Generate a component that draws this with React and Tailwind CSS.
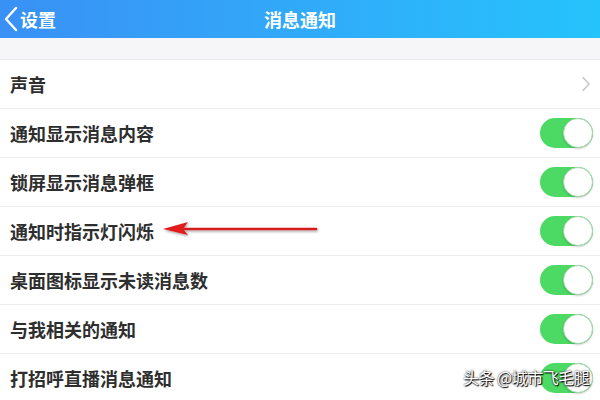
import React from "react";

// 消息通知设置页
const ROWS = [
  { label: "声音", type: "link" },
  { label: "通知显示消息内容", type: "toggle" },
  { label: "锁屏显示消息弹框", type: "toggle" },
  { label: "通知时指示灯闪烁", type: "toggle" },
  { label: "桌面图标显示未读消息数", type: "toggle" },
  { label: "与我相关的通知", type: "toggle" },
  { label: "打招呼直播消息通知", type: "toggle" },
];

function Toggle() {
  return (
    <div className="w-[53px] h-[30px] rounded-full bg-[#4cd964] flex justify-end">
      <div className="w-[30px] h-[30px] rounded-full bg-white border-[1.5px] border-[#a5d9ad] shadow-[0_1px_2px_rgba(0,0,0,0.2)]" />
    </div>
  );
}

export default function App() {
  return (
    <div
      className="relative w-[600px] h-[400px] overflow-hidden bg-white"
      style={{ fontFamily: '"Noto Sans CJK SC", "Noto Sans", sans-serif' }}
    >
      {/* Header */}
      <div className="h-[38px] grid grid-cols-[1fr_auto_1fr] items-center bg-gradient-to-r from-[#3990f5] to-[#25c3fc] text-white">
        <div className="flex items-center pl-[4px] gap-[2px]">
          <svg width="14" height="26" viewBox="0 0 14 26" fill="none">
            <path d="M12 2 L2 13 L12 24" stroke="white" strokeWidth="2.4" strokeLinecap="round" strokeLinejoin="round" />
          </svg>
          <span className="text-[18px] font-semibold leading-none">设置</span>
        </div>
        <div className="text-[18px] font-semibold leading-none">消息通知</div>
        <div />
      </div>

      {/* Spacer band */}
      <div className="h-[22px] bg-[#f6f6f8] border-b border-[#e9e9ec]" />

      {/* Rows */}
      <div className="flex flex-col">
        {ROWS.map((row) => (
          <div
            key={row.label}
            className="h-[49px] shrink-0 border-b border-[#eeeeee] flex items-center justify-between pl-[10px] pr-[7px]"
          >
            <span className="text-[18px] font-semibold text-[#2e2e2e] leading-none">{row.label}</span>
            {row.type === "toggle" ? (
              <Toggle />
            ) : (
              <svg width="10" height="16" viewBox="0 0 10 16" fill="none" className="mr-[2px]">
                <path d="M2 1.5 L8 8 L2 14.5" stroke="#c7c7cc" strokeWidth="1.6" strokeLinecap="round" strokeLinejoin="round" />
              </svg>
            )}
          </div>
        ))}
      </div>

      {/* Red arrow annotation */}
      <svg className="absolute left-[158px] top-[218px]" width="166" height="24" viewBox="0 0 166 24">
        <defs>
          <filter id="sh" x="-10%" y="-50%" width="120%" height="200%">
            <feDropShadow dx="1" dy="1.5" stdDeviation="1.2" floodColor="#000" floodOpacity="0.35" />
          </filter>
        </defs>
        <g filter="url(#sh)">
          <line x1="26" y1="11" x2="158" y2="11" stroke="#d41f1f" strokeWidth="2.6" strokeLinecap="round" />
          <polygon points="5,11 30,4 25,11 30,17" fill="#e01a1a" />
        </g>
      </svg>

      {/* Watermark */}
      <div
        className="absolute left-[463px] top-[369px] text-[16px] text-white leading-none tracking-[-0.5px]"
        style={{ textShadow: "0 0 2px #000, 1px 1px 1px #000" }}
      >
        头条 @城市飞毛腿
      </div>
    </div>
  );
}
